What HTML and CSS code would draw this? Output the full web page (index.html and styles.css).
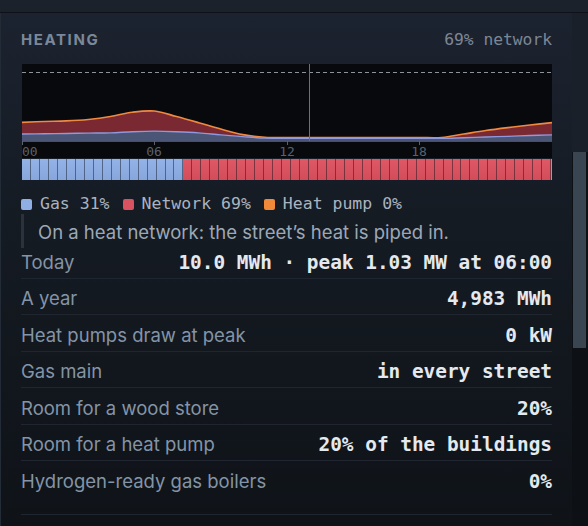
FILE: index.html
```html
<!DOCTYPE html>
<html lang="en">
<head>
  <meta charset="UTF-8">
  <meta name="viewport" content="width=device-width, initial-scale=1.0">
  <title>Street - Heating</title>
  <link rel="stylesheet" href="styles.css">
</head>
<body>
  <!-- End of the section above -->
  <div class="section-above"></div>

  <div class="layout">
    <section class="panel">
      <header class="panel-head">
        <h2>Heating</h2>
        <span class="share">69% network</span>
      </header>

      <!-- Demand over the day, stacked by source -->
      <svg class="chart" id="chart" width="530" height="94" viewBox="0 0 530 94">
        <line class="capacity" x1="0" y1="8.5" x2="530" y2="8.5"></line>
        <path class="area-network" id="area-network"></path>
        <path class="area-gas" id="area-gas"></path>
        <path class="line-network" id="line-network"></path>
        <path class="line-gas" id="line-gas"></path>
        <line class="axis" x1="0" y1="77.5" x2="530" y2="77.5"></line>
        <g class="ticks">
          <line x1="0.5" y1="77" x2="0.5" y2="81"></line>
          <line x1="132.5" y1="77" x2="132.5" y2="81"></line>
          <line x1="265.5" y1="77" x2="265.5" y2="81"></line>
          <line x1="397.5" y1="77" x2="397.5" y2="81"></line>
        </g>
        <g class="tick-labels">
          <text class="first" x="0" y="92">00</text>
          <text x="132" y="92">06</text>
          <text x="265" y="92">12</text>
          <text x="397" y="92">18</text>
        </g>
        <line class="cursor" x1="287.5" y1="0" x2="287.5" y2="77"></line>
      </svg>

      <!-- One cell per building, coloured by how it is heated -->
      <div class="buildings" id="buildings"></div>

      <ul class="legend">
        <li><span class="swatch gas"></span>Gas 31%</li>
        <li><span class="swatch network"></span>Network 69%</li>
        <li><span class="swatch pump"></span>Heat pump 0%</li>
      </ul>

      <p class="note">On a heat network: the street’s heat is piped in.</p>

      <dl class="facts">
        <div class="fact"><dt>Today</dt><dd>10.0 MWh · peak 1.03 MW at 06:00</dd></div>
        <div class="fact"><dt>A year</dt><dd>4,983 MWh</dd></div>
        <div class="fact"><dt>Heat pumps draw at peak</dt><dd>0 kW</dd></div>
        <div class="fact"><dt>Gas main</dt><dd>in every street</dd></div>
        <div class="fact"><dt>Room for a wood store</dt><dd>20%</dd></div>
        <div class="fact"><dt>Room for a heat pump</dt><dd>20% of the buildings</dd></div>
        <div class="fact"><dt>Hydrogen-ready gas boilers</dt><dd>0%</dd></div>
      </dl>

      <div class="panel-end"></div>
    </section>

    <div class="scrollbar"><div class="thumb"></div></div>
  </div>

  <script>
    // Hourly demand in MW, 00:00 to 24:00
    const totalDemand = [0.64, 0.67, 0.69, 0.74, 0.84, 0.99, 1.03, 0.84, 0.63, 0.41, 0.22, 0.13,
      0.12, 0.12, 0.12, 0.12, 0.12, 0.12, 0.12, 0.12, 0.24, 0.36, 0.46, 0.55, 0.63];
    const gasDemand = [0.24, 0.25, 0.26, 0.27, 0.28, 0.32, 0.34, 0.32, 0.28, 0.21, 0.15, 0.10,
      0.09, 0.09, 0.09, 0.09, 0.09, 0.09, 0.09, 0.09, 0.11, 0.14, 0.16, 0.19, 0.21];

    const chartWidth = 530;
    const baseline = 77;
    const pxPerMW = 29.1;

    function toPoints(values) {
      return values.map((v, i) => [
        +(i * chartWidth / (values.length - 1)).toFixed(2),
        +(baseline - v * pxPerMW).toFixed(2)
      ]);
    }

    // Catmull-Rom through the points, as cubic segments
    function curve(points) {
      let d = '';
      for (let i = 0; i < points.length - 1; i++) {
        const p0 = points[i - 1] || points[i];
        const p1 = points[i];
        const p2 = points[i + 1];
        const p3 = points[i + 2] || p2;
        const c1 = [p1[0] + (p2[0] - p0[0]) / 6, p1[1] + (p2[1] - p0[1]) / 6];
        const c2 = [p2[0] - (p3[0] - p1[0]) / 6, p2[1] - (p3[1] - p1[1]) / 6];
        d += ` C${c1[0].toFixed(2)},${c1[1].toFixed(2)} ${c2[0].toFixed(2)},${c2[1].toFixed(2)} ${p2[0]},${p2[1]}`;
      }
      return d;
    }

    const totalPts = toPoints(totalDemand);
    const gasPts = toPoints(gasDemand);
    const gasBack = gasPts.slice().reverse();

    const totalLine = `M${totalPts[0][0]},${totalPts[0][1]}` + curve(totalPts);
    const gasLine = `M${gasPts[0][0]},${gasPts[0][1]}` + curve(gasPts);

    document.getElementById('line-network').setAttribute('d', totalLine);
    document.getElementById('line-gas').setAttribute('d', gasLine);
    document.getElementById('area-network').setAttribute('d',
      totalLine + ` L${gasBack[0][0]},${gasBack[0][1]}` + curve(gasBack) + ' Z');
    document.getElementById('area-gas').setAttribute('d',
      gasLine + ` L${chartWidth},${baseline} L0,${baseline} Z`);

    // Buildings on the street
    const buildings = { gas: 18, network: 41 };
    const strip = document.getElementById('buildings');
    Object.keys(buildings).forEach(kind => {
      for (let i = 0; i < buildings[kind]; i++) {
        const cell = document.createElement('span');
        cell.className = 'cell ' + kind;
        strip.appendChild(cell);
      }
    });
  </script>
</body>
</html>
```

FILE: styles.css
```css
/* Page */
* {
  box-sizing: border-box;
}

body {
  margin: 0;
  height: 526px;
  overflow: hidden;
  background: #1b222c;
  font-family: 'Inter', 'Noto Sans', sans-serif;
  color: #e4e9ef;
}

.section-above {
  height: 13px;
  background: #1b222c;
  border-bottom: 1px solid #0e1218;
}

.layout {
  display: flex;
  height: 513px;
}

/* Panel */
.panel {
  flex: 1;
  padding: 17px 20px 0 21px;
  background: linear-gradient(#1c2330, #151b23 40%, #0f1318);
  box-shadow: inset 1px 0 #232b36;
}

.panel-head {
  display: flex;
  justify-content: space-between;
  align-items: baseline;
  height: 20px;
  line-height: 20px;
  margin-bottom: 14px;
}

.panel-head h2 {
  margin: 0;
  font-size: 15px;
  font-weight: 700;
  letter-spacing: 1.6px;
  text-transform: uppercase;
  color: #7b889a;
}

.share {
  font-family: 'DejaVu Sans Mono', monospace;
  font-size: 16.3px;
  color: #7d8796;
}

/* Chart */
.chart {
  display: block;
  margin-left: 1px;
  background: #07090c;
}

.capacity {
  stroke: #8d939c;
  stroke-width: 1;
  stroke-dasharray: 4 3;
}

.area-network {
  fill: #7a2832;
}

.area-gas {
  fill: #4b5676;
}

.line-network {
  fill: none;
  stroke: #ee8a42;
  stroke-width: 1.6;
}

.line-gas {
  fill: none;
  stroke: #9099dc;
  stroke-width: 1.4;
}

.axis {
  stroke: #4a515b;
  stroke-width: 1;
}

.ticks line {
  stroke: #5a616b;
  stroke-width: 1;
}

.tick-labels text {
  font-family: 'DejaVu Sans Mono', monospace;
  font-size: 13px;
  fill: #59616c;
  text-anchor: middle;
}

.tick-labels .first {
  text-anchor: start;
}

.cursor {
  stroke: #6b717b;
  stroke-width: 1;
}

/* Buildings strip */
.buildings {
  display: flex;
  width: 530px;
  height: 21px;
  margin: 1px 0 0 1px;
  border-right: 1px solid #f0883e;
}

.cell {
  flex: 1;
  box-shadow: inset -1px 0 rgba(10, 14, 22, 0.45);
}

.cell.gas {
  background: linear-gradient(#93b3e8, #87a7dc);
}

.cell.network {
  background: linear-gradient(#de5865, #d24c5a);
}

/* Legend */
.legend {
  display: flex;
  gap: 13px;
  margin: 14px 0 0;
  padding: 0;
  list-style: none;
  font-family: 'DejaVu Sans Mono', monospace;
  font-size: 16.5px;
  line-height: 20px;
  color: #aab3bf;
}

.legend li {
  display: flex;
  align-items: center;
  gap: 8px;
}

.swatch {
  width: 11px;
  height: 11px;
  border-radius: 2px;
}

.swatch.gas {
  background: #8eaee4;
}

.swatch.network {
  background: #d9525f;
}

.swatch.pump {
  background: #f08a3a;
}

/* Note */
.note {
  margin: 0;
  padding: 6px 0 4px 14px;
  border-left: 3px solid #2b323c;
  font-size: 18.5px;
  line-height: 24px;
  color: #9da8b6;
}

/* Facts */
.facts {
  margin: 0;
}

.fact {
  display: flex;
  justify-content: space-between;
  align-items: baseline;
  padding: 7.5px 0 3px;
  border-bottom: 1px solid #1f262f;
  line-height: 24px;
}

.fact:first-child {
  padding-top: 1.5px;
}

.fact:last-child {
  border-bottom: none;
}

.fact dt {
  font-size: 18.5px;
  color: #8494a7;
}

.fact dd {
  margin: 0;
  font-family: 'DejaVu Sans Mono', monospace;
  font-weight: 700;
  font-size: 19.4px;
  color: #e4e9ef;
}

.panel-end {
  margin-top: 17px;
  border-top: 1px solid #1f262f;
}

/* Scrollbar */
.scrollbar {
  width: 16px;
  padding: 139px 2px 0 1px;
  background: linear-gradient(#1a2029 139px, #0d1014 139px);
}

.thumb {
  height: 196px;
  background: #3a4552;
}
```
